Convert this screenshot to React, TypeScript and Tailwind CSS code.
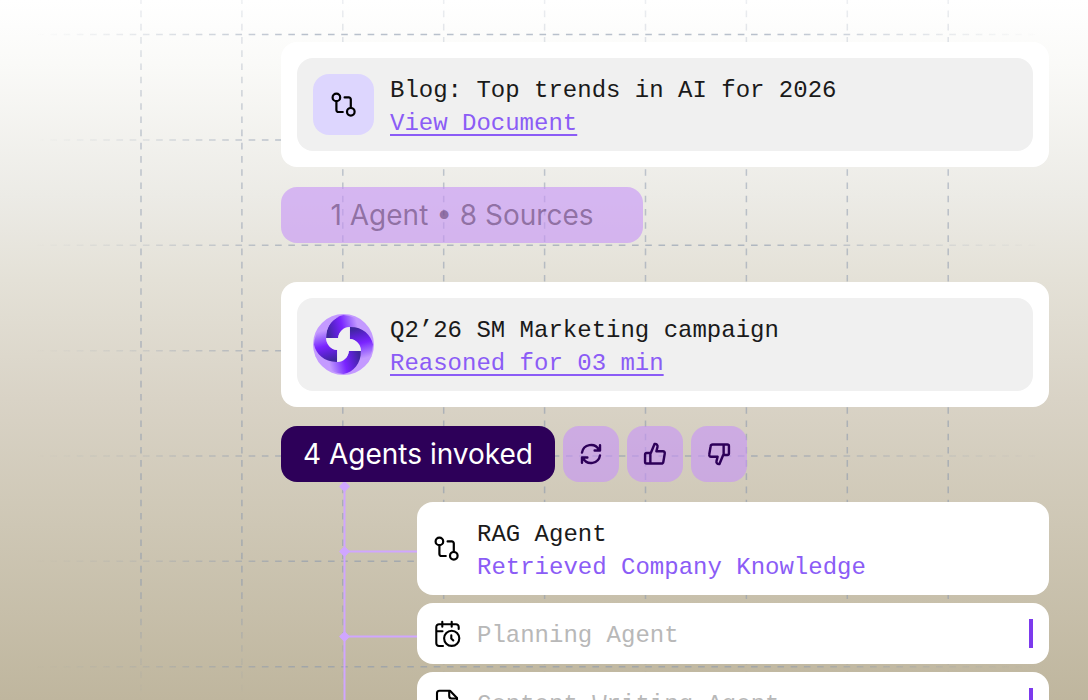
import React from "react";

const verticals = [0, 1, 2, 3, 4, 5, 6, 7, 8].map((i) => 141 + i * 100.9);
const horizontals = [0, 1, 2, 3, 4, 5, 6].map((i) => 34.6 + i * 105.35);

function GridBackdrop() {
  return (
    <svg className="pointer-events-none absolute left-0 top-0" width="1088" height="700" aria-hidden="true">
      <defs>
        <linearGradient id="fadeX" x1="0" x2="1" y1="0" y2="0">
          <stop offset="0.03" stopColor="#8b98ad" stopOpacity="0" />
          <stop offset="0.12" stopColor="#8b98ad" stopOpacity="0.18" />
          <stop offset="0.28" stopColor="#8b98ad" stopOpacity="0.6" />
          <stop offset="0.7" stopColor="#8b98ad" stopOpacity="0.6" />
          <stop offset="0.86" stopColor="#8b98ad" stopOpacity="0.2" />
          <stop offset="0.96" stopColor="#8b98ad" stopOpacity="0" />
        </linearGradient>
        <linearGradient id="fadeY" x1="0" x2="0" y1="0" y2="1">
          <stop offset="0" stopColor="#8b98ad" stopOpacity="0.15" />
          <stop offset="0.2" stopColor="#8b98ad" stopOpacity="0.5" />
          <stop offset="0.83" stopColor="#8b98ad" stopOpacity="0.6" />
          <stop offset="1" stopColor="#8b98ad" stopOpacity="0" />
        </linearGradient>
      </defs>
      <mask id="maskX" maskUnits="userSpaceOnUse" x="0" y="0" width="1088" height="700">
        {horizontals.map((y) => (
          <line key={y} x1="10.7" x2="1088" y1={y} y2={y} stroke="#fff" strokeWidth="1.5" strokeDasharray="6.6 6.62" />
        ))}
      </mask>
      <mask id="maskY" maskUnits="userSpaceOnUse" x="0" y="0" width="1088" height="700">
        {verticals.map((x) => (
          <line key={x} y1="-2.6" y2="700" x1={x} x2={x} stroke="#fff" strokeWidth="1.5" strokeDasharray="6.6 6.62" />
        ))}
      </mask>
      <rect width="1088" height="700" fill="url(#fadeX)" mask="url(#maskX)" />
      <rect width="1088" height="700" fill="url(#fadeY)" mask="url(#maskY)" />
    </svg>
  );
}

function CompareIcon() {
  return (
    <svg className="size-7 shrink-0" viewBox="0 0 28 28" fill="none" stroke="#000" strokeWidth="2.2" strokeLinecap="round" strokeLinejoin="round" aria-hidden="true">
      <circle cx="6.4" cy="6.4" r="3.8" />
      <circle cx="20.8" cy="20.8" r="3.8" />
      <path d="M6.400 10.300v8.700a2 2 0 0 0 2 2H12.800M14.600 6.400h4.200a2 2 0 0 1 2 2v8.500" />
    </svg>
  );
}

function CalendarIcon() {
  return (
    <svg className="size-7 shrink-0" viewBox="0 0 28 28" fill="none" stroke="#000" strokeWidth="2.1" strokeLinecap="round" strokeLinejoin="round" aria-hidden="true">
      <path d="M10 26H6a2.700 2.700 0 0 1-2.700-2.700V7A2.700 2.700 0 0 1 6 4.300H23A2.700 2.700 0 0 1 25.700 7v2M9.300 1.700v5M18.700 1.700v5M3.300 11.300h6.200" />
      <circle cx="18.7" cy="18.3" r="7.6" />
      <path d="M18.300 15.200v3.200l2 2" />
    </svg>
  );
}

function FileIcon() {
  return (
    <svg className="size-7 shrink-0" viewBox="0 0 28 28" fill="none" stroke="#000" strokeWidth="2.1" strokeLinecap="round" strokeLinejoin="round" aria-hidden="true">
      <path d="M17 1.700H6.500A2.500 2.500 0 0 0 4 4.200V23.500a2.500 2.500 0 0 0 2.500 2.500h15a2.500 2.500 0 0 0 2.500-2.500V9z" />
      <path d="M16.200 2v5a2.500 2.500 0 0 0 2.500 2.500H24" />
    </svg>
  );
}

function Logo() {
  return (
    <svg className="size-[61px] shrink-0" viewBox="-31 -31 62 62" aria-hidden="true">
      <defs>
        <linearGradient id="blade" gradientUnits="userSpaceOnUse" x1="-16" y1="-12" x2="22" y2="-22">
          <stop offset="0" stopColor="#40279f" />
          <stop offset="0.18" stopColor="#5a22cf" />
          <stop offset="0.4" stopColor="#7a24ff" />
          <stop offset="0.6" stopColor="#9a62fd" />
          <stop offset="0.8" stopColor="#c49aff" />
        </linearGradient>
      </defs>
      <circle r="31" fill="#c49aff" />
      {[0, 90, 180, 270].map((a) => (
        <path
          key={a}
          transform={`rotate(${a})`}
          fill="url(#blade)"
          d="M-17.700-6.500C-18-19-10-28 0-30A30 30 0 0 1 28-5C24-14 16-17.700 6.500-17.700A12 12 0 0 0-5.500-6.500z"
        />
      ))}
      <path
        fill="#f0f0f0"
        d="M-17.700-6.500H-5.500A12 12 0 0 1 6.500-17.700V-5.500A12 12 0 0 1 17.700 6.500H5.500A12 12 0 0 1-6.500 17.700V5.500A12 12 0 0 1-17.700-6.500z"
      />
    </svg>
  );
}

function ToolButton({ label, children }: { label: string; children: React.ReactNode }) {
  return (
    <button type="button" aria-label={label} className="flex size-14 items-center justify-center rounded-2xl bg-[#c792f9]/60 text-[#2d0059]">
      <svg className="size-[26px]" viewBox="0 0 28 28" fill="none" stroke="currentColor" strokeWidth="2.6" strokeLinecap="round" strokeLinejoin="round" aria-hidden="true">
        {children}
      </svg>
    </button>
  );
}

function ResultCard({ icon, title, link }: { icon: React.ReactNode; title: string; link: string }) {
  return (
    <article className="rounded-2xl bg-white p-4">
      <div className="flex items-center gap-4 rounded-2xl bg-[#f0f0f0] p-4">
        {icon}
        <div className="-my-2 flex flex-col items-start pt-1 font-['Liberation_Mono',monospace] text-2xl/[33px] text-[#1a1a1a]">
          <h2>{title}</h2>
          <a href="#" className="text-[#8b5cf6] underline decoration-2 underline-offset-4">{link}</a>
        </div>
      </div>
    </article>
  );
}

function PendingAgent({ icon, name }: { icon: React.ReactNode; name: string }) {
  return (
    <li className="flex h-[61px] items-center gap-4 rounded-2xl bg-white px-4">
      {icon}
      <span className="grow pt-1 font-['Liberation_Mono',monospace] text-2xl/[33px] text-[#b8b8b8]">{name}</span>
      <span className="h-[29px] w-1 bg-[#7c3aed]" />
    </li>
  );
}

export default function App() {
  return (
    <div className="relative h-screen overflow-hidden bg-[linear-gradient(180deg,#ffffff_0%,#fafaf8_9%,#ecebe6_28%,#e4e1d7_40%,#d9d3c6_57%,#cec7b5_75%,#bfb69e_100%)]">
      <GridBackdrop />
      <main className="relative flex flex-col pl-[281px] pr-[39px] pt-[42px]">
        <ResultCard
          icon={<div className="flex size-[61px] shrink-0 items-center justify-center rounded-2xl bg-[#ddd6fe]"><CompareIcon /></div>}
          title="Blog: Top trends in AI for 2026"
          link="View Document"
        />
        <div className="mt-5 flex h-14 w-[362px] items-center justify-center rounded-2xl bg-[#c792f9]/60 font-[Inter,sans-serif] text-[28px]/8 text-[#3a1a45]/45">
          1 Agent • 8 Sources
        </div>
        <div className="mt-[39px]">
          <ResultCard icon={<Logo />} title="Q2’26 SM Marketing campaign" link="Reasoned for 03 min" />
        </div>
        <div className="mt-[19px] flex gap-2">
          <button type="button" className="flex h-14 w-[274px] items-center justify-center rounded-2xl bg-[#2d0059] font-[Inter,sans-serif] text-[28px]/8 text-white">
            4 Agents invoked
          </button>
          <ToolButton label="Regenerate">
            <path d="M4.300 12.500A9.800 9.800 0 0 1 22.500 9.300M23.700 4.500v5.800h-5.800M23.700 15.500A9.800 9.800 0 0 1 5.500 18.700M4.300 23.500v-5.800h5.800" />
          </ToolButton>
          <ToolButton label="Good response">
            <path d="M9.500 13L13.500 3.200a2.600 2.600 0 0 1 3.200 3.200L15.500 11h7a2 2 0 0 1 2 2.400l-1.500 9a2.200 2.200 0 0 1-2.200 1.900H5a1.700 1.700 0 0 1-1.700-1.700v-8A1.700 1.700 0 0 1 5 13zM9 13v11.300" />
          </ToolButton>
          <ToolButton label="Bad response">
            <path d="M18.500 15L14.500 24.800a2.600 2.600 0 0 1-3.200-3.200L12.500 17h-7a2 2 0 0 1-2-2.400l1.500-9a2.200 2.200 0 0 1 2.200-1.900H23a1.700 1.700 0 0 1 1.700 1.700v8A1.700 1.700 0 0 1 23 15zM19 15V3.700" />
          </ToolButton>
        </div>
        <div className="flex">
          <svg className="h-[218px] w-[136px] shrink-0" viewBox="0 0 136 218" fill="#d0a6ff" stroke="#d0a6ff" aria-hidden="true">
            <path d="M63.500 0v218M63.500 69.500H136M63.500 154.500H136" strokeWidth="2" fill="none" />
            <path stroke="none" d="M63.500-1l5.500 5.500-5.500 5.500-5.500-5.500zM63.500 64l5.500 5.500-5.500 5.500-5.500-5.500zM63.500 149l5.500 5.500-5.500 5.500-5.500-5.500z" />
          </svg>
          <ul className="mt-5 flex min-w-0 grow flex-col gap-2">
            <li className="flex h-[93px] items-center gap-4 rounded-2xl bg-white px-4">
              <CompareIcon />
              <div className="pt-1 font-['Liberation_Mono',monospace] text-2xl/[33px] text-[#1a1a1a]">
                <h3>RAG Agent</h3>
                <p className="text-[#8b5cf6]">Retrieved Company Knowledge</p>
              </div>
            </li>
            <PendingAgent icon={<CalendarIcon />} name="Planning Agent" />
            <PendingAgent icon={<FileIcon />} name="Content Writing Agent" />
          </ul>
        </div>
      </main>
    </div>
  );
}
